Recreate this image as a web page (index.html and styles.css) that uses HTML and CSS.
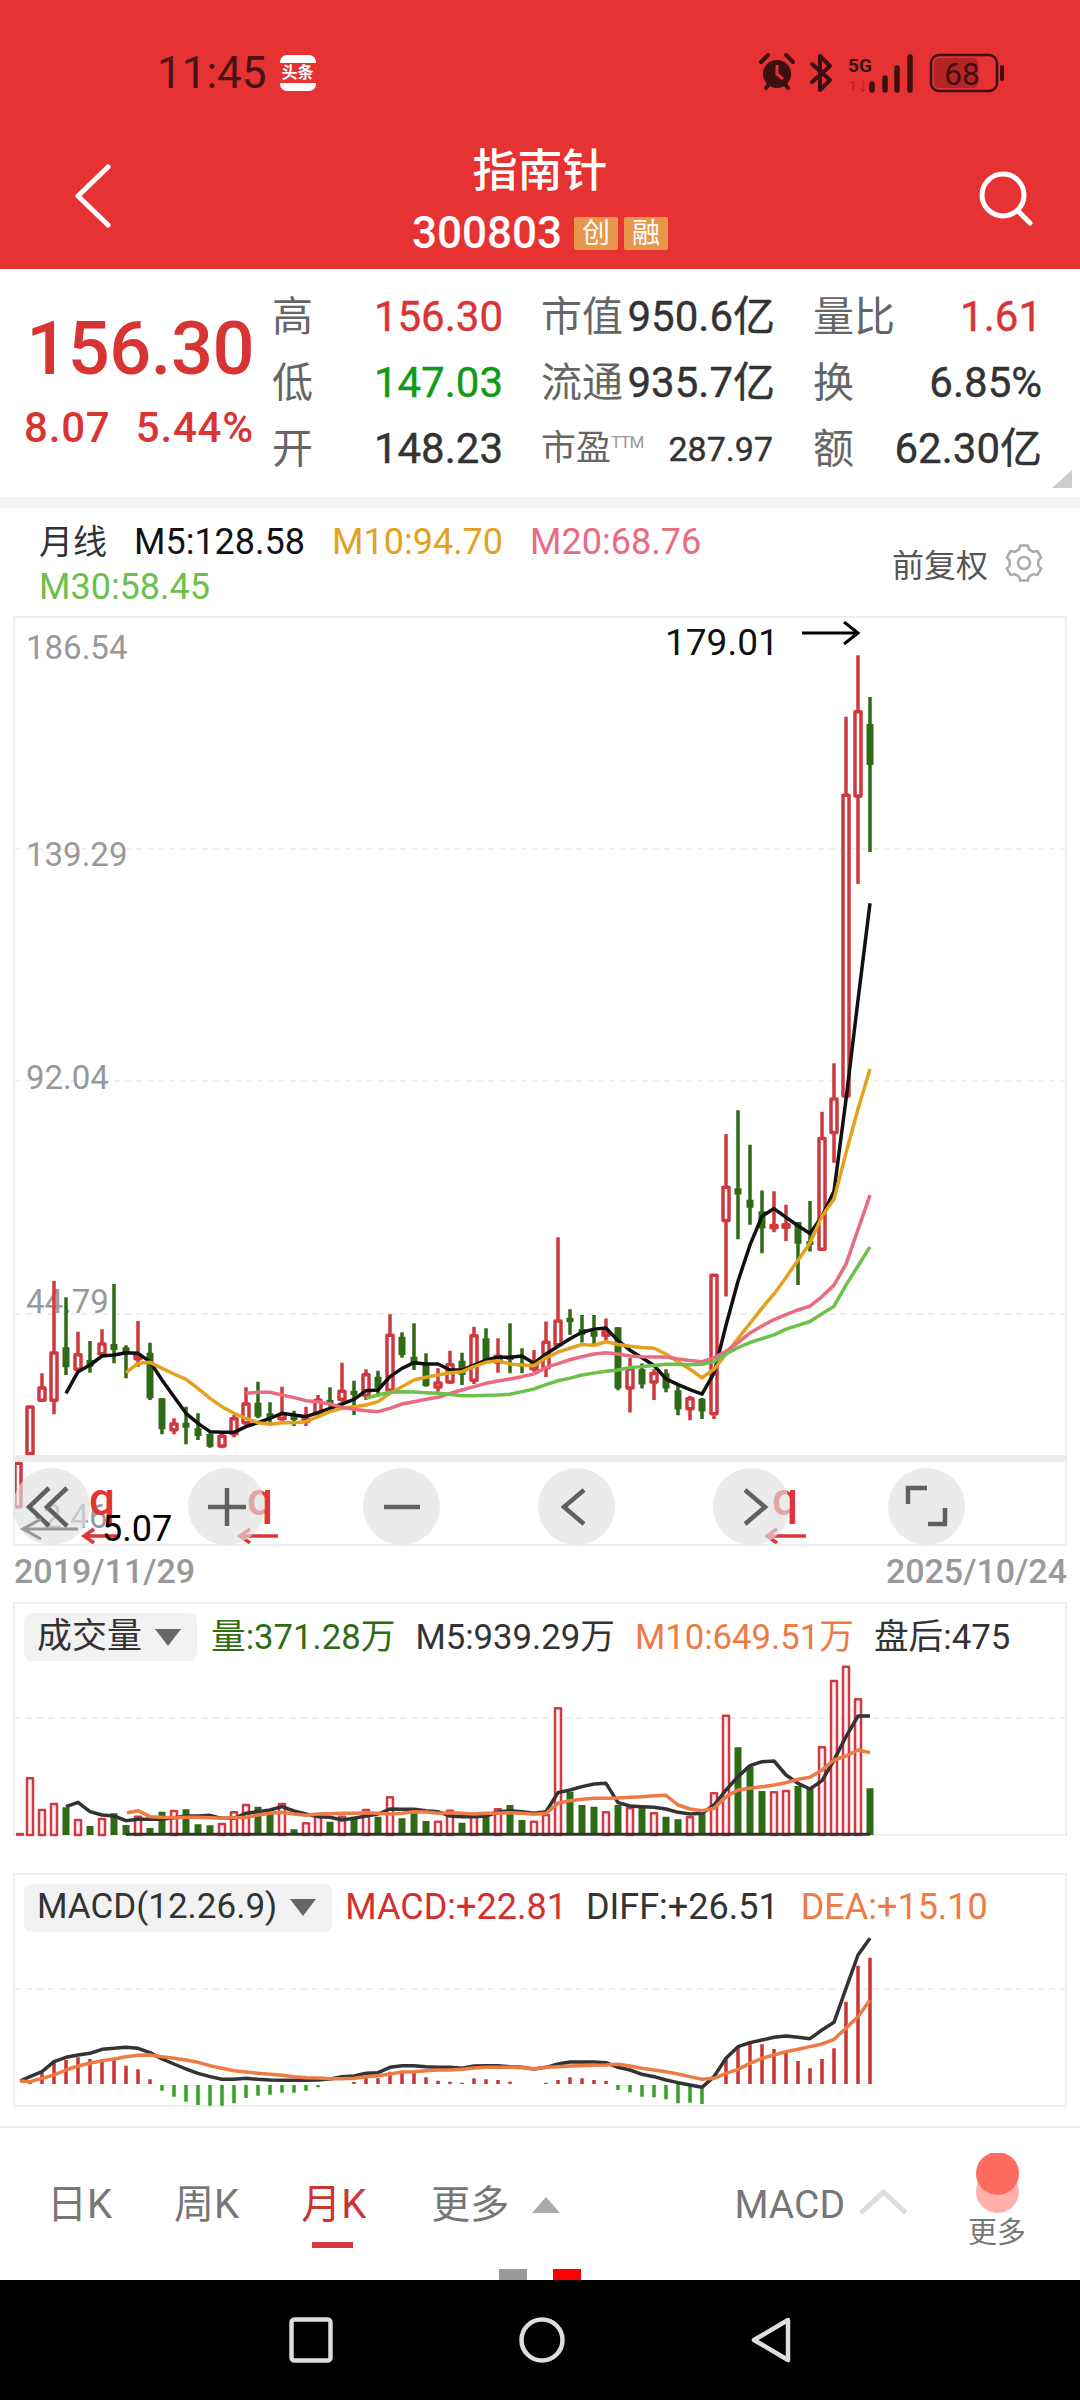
FILE: index.html
```html
<!DOCTYPE html>
<html lang="zh">
<head>
<meta charset="utf-8">
<title>指南针 300803</title>
<link rel="stylesheet" href="styles.css">
</head>
<body>
<div class="page">
  <header class="top">
    <div class="status">
      <span class="clock">11:45</span>
      <span class="app-badge"><span>头条</span></span>
      <svg class="status-icons" viewBox="750 50 260 46" width="260" height="46">
        <g class="si-stroke">
          <path d="M761 62l7-7M793 62l-7-7M766 88l4-5M788 88l-4-5"/>
          <path d="M812 64 830 80 820 90V56L830 66 812 82"/>
        </g>
        <circle cx="777" cy="74" r="14" class="si-fill"/>
        <path class="si-hand" d="M777 65v9l6 5"/>
        <text x="848" y="72" class="si-5g">5G</text>
        <text x="849" y="90" class="si-1x">1↓</text>
        <path class="si-bars" d="M872 90V84M885 90V78M897 90V68M910 90V57"/>
        <rect x="934" y="58" width="44" height="30" rx="5" class="si-batfill"/>
        <rect x="931" y="55" width="66" height="36" rx="8" class="si-bat"/>
        <path class="si-tip" d="M1002 67v12"/>
        <text x="962" y="85" class="si-68">68</text>
      </svg>
    </div>
    <div class="nav-row">
      <div class="nav-side">
        <svg class="back" viewBox="0 0 38 64" width="38" height="64"><path d="M34 3 4 32l30 29"/></svg>
      </div>
      <div class="title-block">
        <div class="title">指南针</div>
        <div class="code-row">
          <span class="code">300803</span>
          <span class="tag">创</span>
          <span class="tag">融</span>
        </div>
      </div>
      <div class="nav-side nav-side-r">
        <svg class="search" viewBox="0 0 56 56" width="56" height="56"><circle cx="25" cy="25" r="21"/><path d="M40 41 52 53"/></svg>
      </div>
    </div>
  </header>

  <section class="quote">
    <div class="price-col">
      <div class="price">156.30</div>
      <div class="change"><span>8.07</span><span>5.44%</span></div>
    </div>
    <div class="stats">
      <div class="stat"><span class="lab">高</span><span class="val up">156.30</span></div>
      <div class="stat"><span class="lab">市值</span><span class="val">950.6亿</span></div>
      <div class="stat"><span class="lab">量比</span><span class="val up">1.61</span></div>
      <div class="stat"><span class="lab">低</span><span class="val down">147.03</span></div>
      <div class="stat"><span class="lab">流通</span><span class="val">935.7亿</span></div>
      <div class="stat"><span class="lab">换</span><span class="val">6.85%</span></div>
      <div class="stat"><span class="lab">开</span><span class="val">148.23</span></div>
      <div class="stat"><span class="lab lab-s">市盈<sup class="ttm">TTM</sup></span><span class="val val-s">287.97</span></div>
      <div class="stat"><span class="lab">额</span><span class="val">62.30亿</span></div>
    </div>
    <i class="corner"></i>
  </section>

  <section class="ma">
    <div class="ma-legend">
      <span class="ma-name">月线</span>
      <span class="c-k">M5:128.58</span>
      <span class="c-y">M10:94.70</span>
      <span class="c-p">M20:68.76</span>
      <span class="c-g">M30:58.45</span>
    </div>
    <div class="adjust">
      <span>前复权</span>
      <svg class="gear" viewBox="0 0 38 38" width="38" height="38">
        <polygon points="15.26,1.4 22.74,1.4 23.96,5.37 28.32,7.89 32.38,6.96 36.12,13.44 33.28,16.48 33.28,21.52 36.12,24.56 32.38,31.04 28.32,30.11 23.96,32.63 22.74,36.6 15.26,36.6 14.04,32.63 9.68,30.11 5.62,31.04 1.88,24.56 4.72,21.52 4.72,16.48 1.88,13.44 5.62,6.96 9.68,7.89 14.04,5.37"/>
        <circle cx="19" cy="19" r="6"/>
      </svg>
    </div>
  </section>

  <section class="frame kchart">
    <svg class="plot" viewBox="15 618 1050 926" width="1050" height="926">
      <path class="grid" d="M15 849H1065M15 1081H1065M15 1314H1065"/>
      <text x="26" y="659" class="ylab">186.54</text>
      <text x="26" y="866" class="ylab">139.29</text>
      <text x="26" y="1089" class="ylab">92.04</text>
      <text x="26" y="1313" class="ylab">44.79</text>
      <text x="34" y="1528" class="ylab">-2.46</text>

      <g transform="translate(0 1200) scale(1 .33333)">
        <path class="wick-r" d="M42 520V605M54 243V643M78 395V520M102 388V470M138 363V500M174 655V703M222 700V745M234 645V712M246 562V675M282 560V662M306 620V678M318 585V650M342 488V605M366 508V600M390 343V575M438 505V575M450 452V552M474 380V552M498 415V518M534 450V515"/>
        <path class="wick-g" d="M66 292V525M90 423V518M114 252V490M126 436V535M150 428V600M162 595V703M186 620V733M198 640V720M210 700V743M258 545V655M270 607V668M294 632V678M330 562V620M354 542V645M378 512V590M402 397V473M414 370V510M426 460V560M462 458V555M486 385V490M510 370V520M522 445V520"/>
        <path class="body-g" d="M66 442V502M90 480V500M114 432V450M126 442V456M150 458V595M162 595V688M186 668V683M198 685V708M210 702V740M258 608V650M270 640V655M294 645V660M330 600V610M354 572V585M378 530V565M402 410V465M414 470V495M426 495V558M462 482V525M486 415V480M510 470V480M522 490V500"/>
        <path class="body-r" d="M15 790h6v130h-6zM27 621h6v140h-6zM39 564h6v37h-6zM51 459h6v142h-6zM75 464h6v44h-6zM99 432h6v29h-6zM135 466h6v10h-6zM171 672h6v17h-6zM219 709h6v29h-6zM231 656h6v45h-6zM243 612h6v56h-6zM279 644h6v12h-6zM303 658h6v6h-6zM315 601h6v40h-6zM339 574h6v24h-6zM363 524h6v62h-6zM387 406h6v165h-6zM435 549h6v12h-6zM447 494h6v52h-6zM471 407h6v134h-6zM495 469h6v17h-6zM531 494h6v12h-6z"/>
      </g>
      <g transform="translate(0 1000) scale(1 .38270)">
        <path class="wick-r" d="M546 840V985M558 620V905M606 832V890M630 935V1078M654 965V1045M690 1035V1098M714 1085V1095M726 350V775M774 500V607M786 535V630M822 292V655M834 165V425M846 -740V255M858 -901V-303"/>
        <path class="wick-g" d="M570 808V875M582 823V895M594 823V900M618 855V1020M642 950V1015M666 965V1025M678 1005V1085M702 1040V1095M738 288V625M750 378V587M762 498V662M798 580V745M810 525V657M870 -792V-387"/>
        <path class="body-g" d="M570 830V842M582 860V875M594 865V880M618 855V1015M642 965V1005M666 975V1015M678 1020V1070M702 1042V1075M738 492V508M750 522V543M762 552V597M798 580V637M810 630V640M870 -721V-614"/>
        <path class="body-r" d="M543 894h6v67h-6zM555 839h6v62h-6zM603 866h6v10h-6zM627 964h6v50h-6zM651 976h6v22h-6zM687 1042h6v26h-6zM711 719h6v362h-6zM723 489h6v87h-6zM771 589h6v6h-6zM783 587h6v7h-6zM819 362h6v289h-6zM831 259h6v87h-6zM843 -535h6v786h-6zM855 -753h6v220h-6z"/>
      </g>

      <g transform="translate(0 1200) scale(1 .33333)">
        <path class="ln ln-k" d="M66 580 78 515 90 495 102 468 114 465 126 458 138 460 150 485 162 540 174 590 186 640 198 670 210 695 222 697 234 697 246 680 258 668 270 655 282 640 294 645 306 650 318 638 330 625 342 612 354 598 366 572 378 570 390 530 402 505 414 488 426 492 438 492 450 510 462 510 474 495 486 480 498 472 510 472 522 468 534 490"/>
        <path class="ln ln-y" d="M126 518 138 490 150 487 162 505 174 522 186 538 198 565 210 595 222 620 234 640 246 655 258 668 270 673 282 668 294 668 306 665 318 650 330 635 342 625 354 620 366 615 378 605 390 580 402 560 414 540 426 532 438 525 450 518 462 515 474 500 486 487 498 482 510 492 522 495 534 497"/>
        <path class="ln ln-p" d="M246 580 258 577 270 577 282 585 294 593 306 602 318 605 330 612 342 622 354 628 366 632 378 635 390 625 402 612 414 605 426 598 438 592 450 580 462 570 474 560 486 550 498 543 510 537 522 530 534 522"/>
        <path class="ln ln-g" d="M366 595 378 585 390 577 402 575 414 576 426 578 438 580 450 583 462 587 474 587 486 586 498 585 510 583 522 575 534 567"/>
      </g>
      <g transform="translate(0 1000) scale(1 .38270)">
        <path class="ln ln-k" d="M534 949 546 925 558 905 570 885 582 868 594 860 606 857 618 890 630 915 642 935 654 955 666 990 678 1005 690 1018 702 1030 714 975 726 850 738 735 750 640 762 565 774 545 786 568 798 590 810 610 822 565 834 500 846 260 858 0 870 -253"/>
        <path class="ln ln-y" d="M534 955 546 935 558 920 570 910 582 900 594 902 606 893 618 900 630 905 642 908 654 910 666 925 678 945 690 965 702 987 714 965 726 925 738 885 750 845 762 805 774 768 786 725 798 680 810 635 822 565 834 520 846 400 858 285 870 180"/>
        <path class="ln ln-p" d="M534 977 546 960 558 950 570 940 582 932 594 925 606 922 618 925 630 930 642 932 654 933 666 933 678 938 690 942 702 945 714 935 726 918 738 895 750 870 762 852 774 835 786 822 798 810 810 800 822 775 834 745 846 690 858 600 870 510"/>
        <path class="ln ln-g" d="M534 1016 546 1005 558 995 570 988 582 980 594 975 606 970 618 967 630 960 642 958 654 955 666 952 678 952 690 953 702 952 714 945 726 925 738 908 750 895 762 885 774 875 786 860 798 850 810 840 822 820 834 800 846 745 858 695 870 645"/>
      </g>

      <text x="665" y="655" class="peak">179.01</text>
      <path class="peak-arrow" d="M802 633H858M844 622l14 11-14 11"/>
      <rect x="15" y="1455" width="1050" height="7" class="band"/>
      <text x="89" y="1515" class="q">q</text>
      <text x="247" y="1515" class="q">q</text>
      <text x="772" y="1515" class="q">q</text>
      <path class="red-arrow" d="M120 1536H84M94 1529l-10 7 10 7M278 1536H240M250 1529l-10 7 10 7M806 1536H767M777 1529l-10 7 10 7"/>
    </svg>
    <div class="tools">
      <span class="tool"><svg viewBox="0 0 77 77" width="77" height="77"><path d="M36 20 16 39l20 19M54 20 34 39l20 19"/></svg></span>
      <span class="tool"><svg viewBox="0 0 77 77" width="77" height="77"><path d="M20 39H58M39 20V58"/></svg></span>
      <span class="tool"><svg viewBox="0 0 77 77" width="77" height="77"><path d="M21 39H57"/></svg></span>
      <span class="tool"><svg viewBox="0 0 77 77" width="77" height="77"><path d="M46 22 26 39l20 17"/></svg></span>
      <span class="tool"><svg viewBox="0 0 77 77" width="77" height="77"><path d="M32 22 52 39 32 56"/></svg></span>
      <span class="tool"><svg viewBox="0 0 77 77" width="77" height="77"><path d="M20 36V20H39M57 40V56H40"/></svg></span>
    </div>
    <svg class="notes" viewBox="15 1500 200 50" width="200" height="50">
      <path class="grey-arrow" d="M78 1529H23M41 1519l-18 10 18 10"/>
      <text x="102" y="1541" class="low">5.07</text>
    </svg>
  </section>

  <div class="dates"><span>2019/11/29</span><span>2025/10/24</span></div>

  <section class="frame panel">
    <div class="legend legend-v">
      <span class="chip">成交量<i class="tri"></i></span>
      <span class="c-vg">量:371.28万</span>
      <span class="c-d">M5:939.29万</span>
      <span class="c-o">M10:649.51万</span>
      <span class="c-d">盘后:475</span>
    </div>
    <svg class="sub" viewBox="15 1664 1050 170" width="1050" height="170">
      <path class="grid" d="M15 1718H1065"/>
      <g transform="translate(0 1590) scale(1 .33333)">
        <path class="vol-g" d="M66 652V735M90 708V735M114 670V735M126 705V735M150 714V735M162 665V735M186 658V735M198 703V735M210 706V735M258 650V735M270 670V735M294 718V735M330 695V735M354 680V735M378 680V735M402 685V735M414 670V735M426 693V735M462 698V735M486 680V735M510 645V735M522 690V735M570 605V735M582 645V735M594 650V735M618 645V735M642 652V735M666 680V735M678 688V735M702 670V735M738 472V735M750 530V735M762 603V735M798 588V735M810 597V735M870 595V735"/>
        <path class="vol-r" d="M27 565h6V735h-6zM39 660h6V735h-6zM51 642h6V735h-6zM75 690h6V735h-6zM99 687h6V735h-6zM135 680h6V735h-6zM171 663h6V735h-6zM219 702h6V735h-6zM231 667h6V735h-6zM243 645h6V735h-6zM279 642h6V735h-6zM303 700h6V735h-6zM315 680h6V735h-6zM339 680h6V735h-6zM363 660h6V735h-6zM387 622h6V735h-6zM435 695h6V735h-6zM447 662h6V735h-6zM471 680h6V735h-6zM495 658h6V735h-6zM531 695h6V735h-6zM543 675h6V735h-6zM555 355h6V735h-6zM603 667h6V735h-6zM627 655h6V735h-6zM651 670h6V735h-6zM687 682h6V735h-6zM711 610h6V735h-6zM723 377h6V735h-6zM771 607h6V735h-6zM783 603h6V735h-6zM819 472h6V735h-6zM831 273h6V735h-6zM843 230h6V735h-6zM855 328h6V735h-6z"/>
        <path class="vol-dash" d="M16 733H24"/>
        <path class="vol-base" d="M126 733H870"/>
        <path class="ln2 ln-d" d="M66 650 78 637 90 665 102 675 114 678 126 692 138 688 150 688 162 688 174 683 186 678 198 678 210 676 222 685 234 685 246 670 258 665 270 660 282 650 294 663 306 672 318 680 330 682 342 690 354 685 366 678 378 672 390 657 402 658 414 658 426 662 438 665 450 678 462 680 474 680 486 678 498 666 510 662 522 665 534 670 546 665 558 608 570 600 582 590 594 582 606 580 618 638 630 648 642 650 654 652 666 657 678 667 690 672 702 670 714 645 726 600 738 560 750 527 762 515 774 513 786 555 798 580 810 597 822 572 834 510 846 440 858 378 870 378"/>
        <path class="ln2 ln-o" d="M127 668 138 662 150 680 162 682 174 683 186 682 198 682 210 683 222 685 234 683 246 682 258 675 270 670 282 667 294 672 306 676 318 672 330 671 342 670 354 670 366 668 378 670 390 672 402 670 414 665 426 666 438 670 450 668 462 670 474 672 486 670 498 670 510 668 522 670 534 673 546 670 558 640 570 632 582 628 594 625 606 625 618 624 630 622 642 620 654 617 666 616 678 645 690 657 702 662 714 655 726 620 738 600 750 595 762 590 774 585 786 578 798 568 810 562 822 540 834 510 846 498 858 480 870 488"/>
      </g>
    </svg>
  </section>

  <section class="frame panel macd">
    <div class="legend legend-m">
      <span class="chip">MACD(12.26.9)<i class="tri"></i></span>
      <span class="c-r">MACD:+22.81</span>
      <span class="c-d">DIFF:+26.51</span>
      <span class="c-o">DEA:+15.10</span>
    </div>
    <svg class="sub" viewBox="15 1935 1050 170" width="1050" height="170">
      <path class="grid" d="M15 1989H1065"/>
      <g transform="translate(0 1860) scale(1 .33333)">
        <path class="hist-r" d="M30 668V672M42 640V672M54 602V672M66 600V672M78 592V672M90 597V672M102 597V672M114 600V672M126 617V672M138 628V672M150 658V672M354 666V672M366 652V672M378 655V672M390 635V672M402 632V672M414 635V672M426 652V672M438 662V672M450 665V672M462 668V672M474 655V672M486 658V672M498 660V672M510 665V672M546 668V672M558 660V672M570 652V672M582 655V672M594 660V672M606 663V672M726 598V672M738 558V672M750 550V672M762 553V672M774 567V672M786 578V672M798 603V672M810 625V672M822 597V672M834 565V672M846 425V672M858 317V672M870 293V672"/>
        <path class="hist-g" d="M162 675V692M174 675V710M186 675V725M198 675V735M210 675V737M222 675V737M234 675V730M246 675V714M258 675V707M270 675V704M282 675V698M294 675V698M306 675V692M318 675V682M618 675V690M630 675V697M642 675V710M654 675V712M666 675V718M678 670V730M690 675V728M702 685V732"/>
        <path class="ln2 ln-d" d="M20 663 30 650 42 635 54 605 66 592 78 585 90 580 102 568 114 565 126 562 138 565 150 578 162 597 174 612 186 627 198 640 210 650 222 658 234 658 246 655 258 658 270 660 282 661 294 661 306 661 318 660 330 657 342 650 354 648 366 640 378 638 390 622 402 617 414 617 426 620 438 622 450 622 462 625 474 618 486 617 498 617 510 620 522 622 534 627 546 622 558 612 570 606 582 606 594 606 606 608 618 622 630 630 642 643 654 650 666 660 678 668 690 675 702 682 714 650 726 595 738 560 750 548 762 540 774 532 786 528 798 532 810 536 822 510 834 487 846 385 858 285 870 235"/>
        <path class="ln2 ln-o" d="M20 663 30 665 42 655 54 645 66 630 78 618 90 610 102 602 114 597 126 590 138 586 150 585 162 590 174 595 186 600 198 607 210 617 222 625 234 632 246 636 258 640 270 643 282 646 294 650 306 653 318 654 330 656 342 656 354 655 366 650 378 647 390 642 402 636 414 635 426 632 438 630 450 630 462 628 474 624 486 622 498 622 510 622 522 623 534 626 546 622 558 620 570 618 582 617 594 616 606 615 618 613 630 618 642 625 654 630 666 635 678 642 690 650 702 658 714 655 726 640 738 628 750 610 762 595 774 585 786 575 798 568 810 560 822 552 834 538 846 505 858 470 870 420"/>
      </g>
    </svg>
  </section>

  <footer class="tabs">
    <div class="tab-row">
      <span class="tab">日K</span>
      <span class="tab">周K</span>
      <span class="tab active">月K</span>
      <span class="tab tab-more">更多<i class="tri-up"></i></span>
      <span class="tab tab-macd">MACD</span>
      <svg class="chev" viewBox="0 0 49 26" width="49" height="26"><path d="M2 24 24.500 3 47 24"/></svg>
      <div class="more">
        <svg viewBox="0 0 43 60" width="43" height="60"><circle cx="21.500" cy="38.500" r="21.500" class="dot-pale"/><circle cx="21.500" cy="20.500" r="21.500" class="dot-red"/></svg>
        <span>更多</span>
      </div>
    </div>
    <div class="pager"><i class="pg"></i><i class="pg pg-on"></i></div>
  </footer>

  <nav class="sysnav">
    <svg viewBox="0 0 44 46" width="44" height="46"><rect x="2.500" y="2.500" width="39" height="41" rx="3"/></svg>
    <svg viewBox="0 0 46 46" width="46" height="46"><circle cx="23" cy="23" r="20.500"/></svg>
    <svg viewBox="0 0 40 46" width="40" height="46"><path d="M37 3 3 23l34 20z"/></svg>
  </nav>
</div>
</body>
</html>
```

FILE: styles.css
```css
* { box-sizing: border-box; }
html, body { margin: 0; padding: 0; background: #fff; }
body { font-family: Roboto, "Noto Sans CJK SC", sans-serif; }
i { font-style: normal; display: block; }
svg { display: block; }
.page { width: 1080px; height: 2400px; overflow: hidden; display: flex; flex-direction: column; }

/* header */
.top { height: 269px; background: #e63232; flex: none; }
.status { height: 110px; padding: 36px 70px 0 157px; display: flex; align-items: center; }
.clock { font-size: 44px; color: #4a1212; line-height: 74px; }
.app-badge { margin-left: 13px; width: 36px; height: 36px; background: #fff; border-radius: 7px; display: flex; align-items: center; }
.app-badge span { display: block; width: 100%; background: #e63232; color: #fff; font-size: 16px; line-height: 20px; text-align: center; font-weight: 700; }
.status-icons { margin-left: auto; }
.si-stroke path { fill: none; stroke: #3d0f10; stroke-width: 4; stroke-linecap: round; stroke-linejoin: round; }
.si-fill { fill: #3d0f10; }
.si-hand { fill: none; stroke: #e63232; stroke-width: 3; }
.si-5g { font-size: 19px; font-weight: 700; fill: #3d0f10; }
.si-1x { font-size: 13px; fill: #3d0f10; opacity: .4; }
.si-bars { stroke: #3d0f10; stroke-width: 5.500; stroke-linecap: round; fill: none; }
.si-batfill { fill: #b42526; }
.si-bat { fill: none; stroke: #3d0f10; stroke-width: 2.500; }
.si-tip { stroke: #3d0f10; stroke-width: 4; stroke-linecap: round; }
.si-68 { font-size: 32px; fill: #3d0f10; text-anchor: middle; }

.nav-row { height: 159px; display: grid; grid-template-columns: 120px 1fr 120px; }
.nav-side { padding: 54px 0 0 74px; }
.nav-side-r { padding: 60px 46px 0 0; display: flex; justify-content: flex-end; align-items: flex-start; }
.back path { fill: none; stroke: #fff; stroke-width: 5; stroke-linecap: round; stroke-linejoin: round; }
.search circle, .search path { fill: none; stroke: #fff; stroke-width: 5; stroke-linecap: round; }
.title-block { padding-top: 37px; display: flex; flex-direction: column; align-items: center; color: #fff; }
.title { font-size: 45px; line-height: 50px; font-weight: 500; }
.code-row { margin-top: 11px; height: 50px; display: flex; align-items: center; gap: 6px; }
.code { font-size: 44px; font-weight: 500; margin-right: 6px; }
.tag { width: 44px; height: 33px; background: #e8964c; color: #fff; font-size: 28px; line-height: 33px; text-align: center; border-radius: 2px; }

/* quote */
.quote { position: relative; flex: none; height: 239px; border-bottom: 11px solid #f4f4f4; display: flex; }
.price-col { width: 272px; padding: 40px 18px 0 24px; color: #d93434; text-align: right; }
.price { font-size: 74px; line-height: 80px; font-weight: 500; letter-spacing: -.5px; }
.change { margin-top: 14px; display: flex; justify-content: space-between; font-size: 42px; line-height: 50px; font-weight: 500; letter-spacing: .8px; }
.stats { flex: 1; padding-top: 15px; display: grid; grid-template-columns: 231px 234px 229px; column-gap: 38px; grid-auto-rows: 66px; }
.stat { display: flex; align-items: center; justify-content: space-between; }
.lab { font-size: 41px; color: #666; line-height: 66px; }
.lab-s { font-size: 35px; }
.ttm { font-size: 17px; color: #999; vertical-align: 12px; line-height: 0; letter-spacing: -1px; }
.val { font-size: 42px; line-height: 66px; color: #333; font-weight: 400; white-space: nowrap; -webkit-text-stroke: .4px currentColor; }
.val-s { font-size: 34px; margin-right: 2px; }
.up { color: #d93434; }
.down { color: #0f9a18; }
.corner { position: absolute; right: 8px; bottom: 9px; width: 0; height: 0; border-left: 20px solid transparent; border-bottom: 18px solid #ccc; }

/* ma legend */
.ma { flex: none; height: 108px; padding: 12px 37px 0 39px; display: flex; justify-content: space-between; }
.ma-legend { width: 680px; display: flex; flex-wrap: wrap; column-gap: 27px; font-size: 36px; line-height: 45px; align-content: flex-start; }
.ma-name { color: #333; font-size: 34px; }
.c-k { color: #111; }
.c-y { color: #e3a11e; }
.c-p { color: #ea6a80; }
.c-g { color: #6cc04c; }
.adjust { display: flex; align-items: center; gap: 17px; height: 50px; margin-top: 18px; font-size: 32px; color: #555; }
.gear polygon, .gear circle { fill: none; stroke: #aaa; stroke-width: 2.500; stroke-linejoin: round; }

/* frames */
.frame { flex: none; position: relative; margin: 0 13px; width: 1054px; border: 2px solid #eee; }
.kchart { height: 930px; }
.plot { overflow: hidden; }
.grid { fill: none; stroke: #ececec; stroke-width: 1.500; stroke-dasharray: 6 5; }
.ylab { font-size: 33px; fill: #999; }
.band { fill: #ebebeb; }
.peak { font-size: 37px; fill: #111; }
.peak-arrow { fill: none; stroke: #000; stroke-width: 3; }
.q { font-size: 46px; font-weight: 500; fill: #e03535; }
.red-arrow { fill: none; stroke: #e03535; stroke-width: 3.500; }
.grey-arrow { fill: none; stroke: #999; stroke-width: 3; }
.low { font-size: 36px; fill: #000; }
.notes { position: absolute; left: 0; top: 882px; }

svg path { vector-effect: non-scaling-stroke; }
.wick-r { fill: none; stroke: #d1383e; stroke-width: 3.500; }
.wick-g { fill: none; stroke: #2f6b14; stroke-width: 3.500; }
.body-g { fill: none; stroke: #2f6b14; stroke-width: 7; }
.body-r { fill: #fff; stroke: #d1383e; stroke-width: 3.500; stroke-linejoin: round; }
.ln { fill: none; stroke-width: 3.500; stroke-linejoin: round; stroke-linecap: butt; }
.ln-k { stroke: #111; }
.ln-y { stroke: #e3a11e; }
.ln-p { stroke: #ea6a80; }
.ln-g { stroke: #6cc04c; }

.tools { position: absolute; left: -2px; top: 850px; display: flex; gap: 98px; }
.tool { width: 77px; height: 77px; border-radius: 50%; background: rgba(225, 225, 225, .66); }
.tool path { fill: none; stroke: #606060; stroke-width: 4.500; }

.dates { flex: none; height: 56px; padding: 0 13px 6px 14px; display: flex; justify-content: space-between; align-items: center; font-size: 34px; font-weight: 500; color: #999; }

.panel { height: 234px; }
.macd { margin-top: 37px; }
.legend { margin: 9px 0 0 9px; height: 48px; display: flex; align-items: center; font-size: 34.700px; line-height: 44px; white-space: nowrap; }
.legend-v { gap: 20px; }
.legend-m { gap: 22px; font-size: 36px; }
.legend-m span { padding-bottom: 2px; }
.legend-m .c-r { margin-right: -3px; }
.legend .chip + span { margin-left: -9px; }
.legend-v .chip + span { margin-left: -6px; }
.chip { height: 48px; padding: 0 16px 0 13px; background: #f2f2f2; border-radius: 8px; color: #333; display: flex; align-items: center; gap: 13px; font-size: 35px; }
.tri { width: 0; height: 0; border-left: 13px solid transparent; border-right: 13px solid transparent; border-top: 17px solid #666; }
.c-vg { color: #2f6b14; }
.c-d { color: #333; }
.c-o { color: #ee7a45; }
.c-r { color: #d32f2f; }
.sub { margin-top: 3px; overflow: visible; }
.vol-g { fill: none; stroke: #2f6b14; stroke-width: 7; }
.vol-r { fill: #fff3f3; stroke: #cf3a45; stroke-width: 2.500; stroke-linejoin: round; }
.vol-dash { fill: none; stroke: #d1383e; stroke-width: 3; }
.vol-base { fill: none; stroke: #333; stroke-width: 3; }
.ln2 { fill: none; stroke-width: 3.500; stroke-linejoin: round; }
.ln-d { stroke: #333; }
.ln-o { stroke: #ee7a45; }
.hist-r { fill: none; stroke: #c93535; stroke-width: 3.500; }
.hist-g { fill: none; stroke: #38a028; stroke-width: 3.500; }

/* tabs */
.tabs { flex: none; margin-top: 19px; height: 154px; border-top: 2px solid #eee; display: flex; flex-direction: column; justify-content: space-between; }
.tab-row { display: flex; align-items: flex-start; padding: 0 53px 0 47px; }
.tab { position: relative; margin-top: 52px; margin-right: 62px; display: flex; align-items: center; font-size: 40px; line-height: 50px; color: #777; white-space: nowrap; }
.tab.active { color: #cc3333; }
.tab.active::after { content: ""; position: absolute; left: 11px; top: 62px; width: 41px; height: 6px; background: #d63a3a; }
.tab-more { font-size: 39px; margin-left: 3px; }
.tri-up { margin-left: 23px; width: 0; height: 0; border-left: 14px solid transparent; border-right: 14px solid transparent; border-bottom: 16px solid #aaa; }
.tab-macd { margin-left: auto; margin-right: 14px; font-size: 39px; }
.chev { margin-top: 61px; margin-right: 59px; }
.chev path { fill: none; stroke: #ddd; stroke-width: 5; }
.more { width: 60px; padding-top: 25px; display: flex; flex-direction: column; align-items: center; font-size: 29px; line-height: 30px; color: #777; }
.more span { margin-top: 5px; white-space: nowrap; }
.dot-pale { fill: #ffb0a8; }
.dot-red { fill: #ff6b5e; }
.pager { display: flex; justify-content: center; gap: 26px; }
.pg { width: 28px; height: 11px; background: #999; }
.pg-on { background: #f00; }

.sysnav { flex: none; height: 120px; background: #000; display: flex; justify-content: center; align-items: center; gap: 186px; }
.sysnav rect, .sysnav circle, .sysnav path { fill: none; stroke: #ddd; stroke-width: 4.500; stroke-linejoin: round; }
```
